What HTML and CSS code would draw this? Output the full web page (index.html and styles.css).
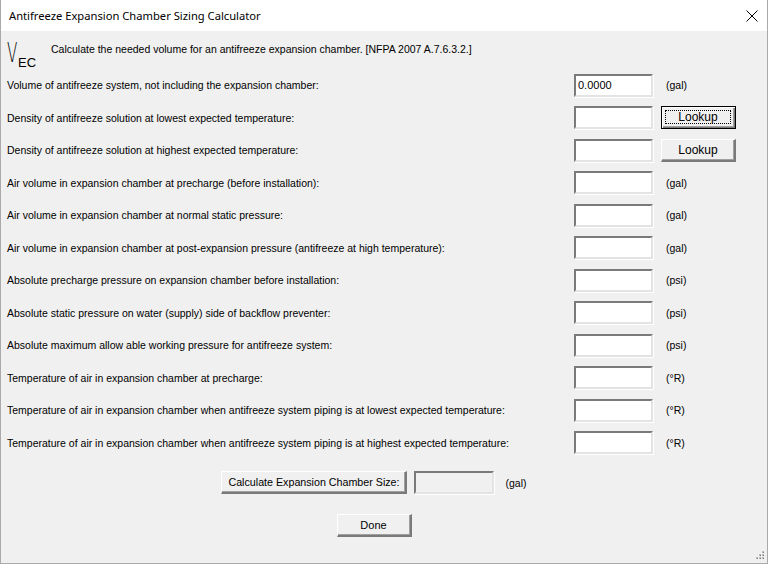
FILE: index.html
```html
<!DOCTYPE html>
<html lang="en">
<head>
    <meta charset="UTF-8">
    <title>Antifreeze Expansion Chamber Sizing Calculator</title>
    <link rel="stylesheet" href="styles.css">
</head>
<body>
    <div class="window">
        <div class="titlebar">
            <span class="title">Antifreeze Expansion Chamber Sizing Calculator</span>
            <span class="close">
                <svg width="12" height="12" viewBox="0 0 12 12">
                    <path d="M0.5 0.5 L11.5 11.5 M11.5 0.5 L0.5 11.5" stroke="#000" stroke-width="1" fill="none"/>
                </svg>
            </span>
        </div>

        <div class="client">
            <div class="intro">
                <span class="symbol"><span class="sym-v">V</span><span class="sym-sub">EC</span></span>
                <span class="intro-text">Calculate the needed volume for an antifreeze expansion chamber. [NFPA 2007 A.7.6.3.2.]</span>
            </div>

            <div class="fields">
                <div class="field">
                    <label>Volume of antifreeze system, not including the expansion chamber:</label>
                    <input class="box" type="text" value="0.0000">
                    <span class="unit">(gal)</span>
                </div>
                <div class="field">
                    <label>Density of antifreeze solution at lowest expected temperature:</label>
                    <input class="box" type="text">
                    <button class="btn lookup focused"><span class="focus-ring">Lookup</span></button>
                </div>
                <div class="field">
                    <label>Density of antifreeze solution at highest expected temperature:</label>
                    <input class="box" type="text">
                    <button class="btn lookup">Lookup</button>
                </div>
                <div class="field">
                    <label>Air volume in expansion chamber at precharge (before installation):</label>
                    <input class="box" type="text">
                    <span class="unit">(gal)</span>
                </div>
                <div class="field">
                    <label>Air volume in expansion chamber at normal static pressure:</label>
                    <input class="box" type="text">
                    <span class="unit">(gal)</span>
                </div>
                <div class="field">
                    <label>Air volume in expansion chamber at post-expansion pressure (antifreeze at high temperature):</label>
                    <input class="box" type="text">
                    <span class="unit">(gal)</span>
                </div>
                <div class="field">
                    <label>Absolute precharge pressure on expansion chamber before installation:</label>
                    <input class="box" type="text">
                    <span class="unit">(psi)</span>
                </div>
                <div class="field">
                    <label>Absolute static pressure on water (supply) side of backflow preventer:</label>
                    <input class="box" type="text">
                    <span class="unit">(psi)</span>
                </div>
                <div class="field">
                    <label>Absolute maximum allow able working pressure for antifreeze system:</label>
                    <input class="box" type="text">
                    <span class="unit">(psi)</span>
                </div>
                <div class="field">
                    <label>Temperature of air in expansion chamber at precharge:</label>
                    <input class="box" type="text">
                    <span class="unit">(°R)</span>
                </div>
                <div class="field">
                    <label>Temperature of air in expansion chamber when antifreeze system piping is at lowest expected temperature:</label>
                    <input class="box" type="text">
                    <span class="unit">(°R)</span>
                </div>
                <div class="field">
                    <label>Temperature of air in expansion chamber when antifreeze system piping is at highest expected temperature:</label>
                    <input class="box" type="text">
                    <span class="unit">(°R)</span>
                </div>
            </div>

            <div class="actions calc-row">
                <button class="btn calc">Calculate Expansion Chamber Size:</button>
                <div class="box result"></div>
                <span class="unit">(gal)</span>
            </div>

            <div class="actions done-row">
                <button class="btn done">Done</button>
            </div>

            <!-- resize grip in the corner -->
            <svg class="grip" width="11" height="11" viewBox="0 0 11 11">
                <g fill="#bcbcbc">
                    <rect x="8" y="0" width="2" height="2"/>
                    <rect x="5" y="3" width="2" height="2"/>
                    <rect x="8" y="3" width="2" height="2"/>
                    <rect x="2" y="6" width="2" height="2"/>
                    <rect x="5" y="6" width="2" height="2"/>
                    <rect x="8" y="6" width="2" height="2"/>
                </g>
                <g fill="#777">
                    <rect x="9" y="1" width="1" height="1"/>
                    <rect x="6" y="4" width="1" height="1"/>
                    <rect x="9" y="4" width="1" height="1"/>
                    <rect x="3" y="7" width="1" height="1"/>
                    <rect x="6" y="7" width="1" height="1"/>
                    <rect x="9" y="7" width="1" height="1"/>
                </g>
            </svg>
        </div>
    </div>
</body>
</html>
```

FILE: styles.css
```css
/* Classic dialog window */
body {
    margin: 0;
    background: #f0f0f0;
    font-family: 'Liberation Sans', Arial, sans-serif;
    font-size: 10.5px;
    color: #000;
}

.window {
    width: 768px;
    height: 564px;
    box-sizing: border-box;
    border: 1px solid #aaaaaa;
    border-top: none;
    display: flex;
    flex-direction: column;
    overflow: hidden;
}

.titlebar {
    height: 31px;
    background: #ffffff;
    display: flex;
    align-items: center;
    justify-content: space-between;
    flex-shrink: 0;
}

.title {
    font-family: 'Noto Sans', 'Open Sans', sans-serif;
    font-size: 11.2px;
    padding-left: 8px;
    padding-bottom: 1px;
}

.close {
    width: 12px;
    height: 12px;
    margin-right: 9px;
    margin-top: 1px;
    display: flex;
}

.client {
    position: relative;
    flex: 1;
    background: #f0f0f0;
}

/* Header line with the V_EC symbol */
.intro {
    height: 38px;
    box-sizing: border-box;
    padding: 12px 0 0 6px;
    display: flex;
    align-items: flex-start;
}

.symbol {
    position: relative;
    width: 44px;
    height: 26px;
    flex-shrink: 0;
}

.sym-v {
    position: absolute;
    left: 0;
    top: 0;
    font-family: 'DejaVu Sans ExtraLight', 'DejaVu Sans', sans-serif;
    font-size: 27px;
    line-height: 20px;
    font-weight: 200;
    transform: scaleX(0.56);
    transform-origin: left top;
}

.sym-sub {
    position: absolute;
    left: 11px;
    top: 14px;
    font-size: 13px;
    line-height: 12px;
}

.intro-text {
    line-height: 13px;
}

/* Input rows */
.fields {
    padding-left: 6px;
}

.field {
    height: 32.5px;
    display: flex;
    align-items: center;
}

.field label {
    width: 567px;
    flex-shrink: 0;
}

.box {
    width: 79px;
    height: 23px;
    box-sizing: border-box;
    margin: 0;
    padding: 0 2px;
    background: #ffffff;
    font: inherit;
    font-size: 11px;
    border-style: solid;
    border-width: 2px;
    border-color: #7a7a7a #e3e3e3 #e3e3e3 #7a7a7a;
    box-shadow: 1px 1px 0 #ffffff;
    outline: none;
    flex-shrink: 0;
}

.unit {
    margin-left: 13px;
}

/* Raised push buttons */
.btn {
    height: 23px;
    box-sizing: border-box;
    margin: 0;
    padding: 0;
    background: #f0f0f0;
    font: inherit;
    font-size: 11px;
    color: #000;
    white-space: nowrap;
    border-style: solid;
    border-width: 1px 2px 2px 1px;
    border-color: #ffffff #7a7a7a #7a7a7a #ffffff;
    box-shadow: inset -1px -1px 0 #a0a0a0;
}

.lookup {
    width: 75px;
    margin-left: 8px;
    font-size: 12px;
}

.focused {
    border: 1px solid #000;
    box-shadow: inset 1px 1px 0 #ffffff, inset -1px -1px 0 #7a7a7a, inset -2px -2px 0 #a0a0a0;
    padding: 3px 4px 4px 3px;
}

.focus-ring {
    display: block;
    height: 100%;
    box-sizing: border-box;
    border: 1px dotted #000;
    line-height: 13px;
}

.actions {
    display: flex;
    justify-content: center;
    align-items: center;
    padding-right: 20px;
}

.calc-row {
    margin-top: 12px;
}

.calc {
    width: 186px;
    font-size: 10.7px;
}

.result {
    width: 80px;
    margin-left: 7px;
    background: #f0f0f0;
}

.calc-row .unit {
    margin-left: 11px;
}

.done-row {
    margin-top: 20px;
}

.done {
    width: 75px;
}

.grip {
    position: absolute;
    right: 2px;
    bottom: 1px;
}
```
